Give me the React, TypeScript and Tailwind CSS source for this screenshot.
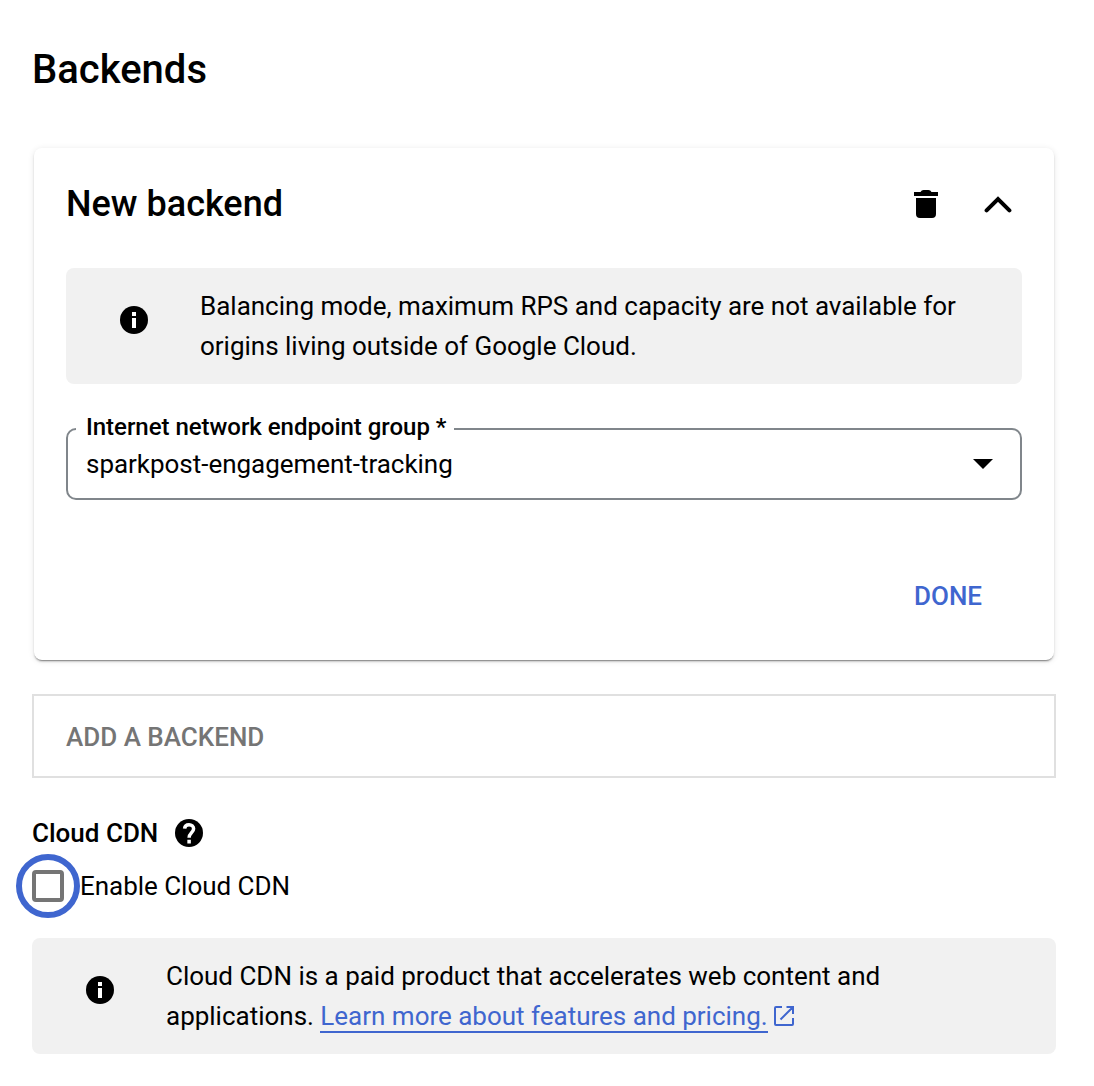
import React from 'react';

function InfoIcon() {
  return (
    <svg className="size-7 shrink-0" viewBox="0 0 28 28">
      <circle cx="14" cy="14" r="14" fill="#000" />
      <path d="M12 6h4v4h-4zM12 12h4v10h-4z" fill="#fff" />
    </svg>
  );
}

export default function App() {
  return (
    <main className="h-[1086px] w-[1094px] overflow-hidden bg-white pl-8 pt-[46px] font-[Roboto,sans-serif] text-[26px] text-black">
      <h1 className="h-[102px] text-[40px] font-medium leading-[48px]">Backends</h1>
      <section className="ml-0.5 h-[512px] w-[1020px] rounded-lg px-8 pt-8 shadow-[0_2px_1px_-1px_rgba(0,0,0,0.32),0_2px_2px_rgba(0,0,0,0.14),0_1px_6px_rgba(0,0,0,0.1)]">
        <header className="flex h-[88px] items-start justify-between">
          <h2 className="text-[36px] font-medium leading-[48px]">New backend</h2>
          <div className="flex gap-[46px] pr-[10px] pt-[10px]">
            <svg className="h-7 w-6" viewBox="0 0 24 28"><path d="M0 2h6.5q1-2 3-2h5q2 0 3 2H24v4H0zM2 8h20v16a4 4 0 0 1-4 4H6a4 4 0 0 1-4-4z" /></svg>
            <svg className="h-7 w-7" viewBox="0 0 28 28"><path d="M2.6 20.4 14 9l11.4 11.4" fill="none" stroke="#000" strokeWidth="4" strokeLinecap="round" /></svg>
          </div>
        </header>
        <div className="flex h-[116px] w-[956px] rounded-lg bg-[#f1f1f1] pl-[54px] pt-[18px] leading-10">
          <div className="w-20 pt-5"><InfoIcon /></div>
          <p className="tracking-[-0.01px]">Balancing mode, maximum RPS and capacity are not available for<br />origins living outside of Google Cloud.</p>
        </div>
        <div className="relative mt-11 flex h-[72px] w-[956px] items-center justify-between rounded-[10px] border-2 border-[#80868b] pl-[18px] pr-[27px]">
          <label className="absolute -top-[19px] left-2 w-[378px] whitespace-nowrap bg-white pl-2.5 text-[24px] font-medium leading-8 tracking-[-0.03px]">Internet network endpoint group *</label>
          <span className="tracking-[-0.03px]">sparkpost-engagement-tracking</span>
          <svg className="h-[10px] w-5" viewBox="0 0 20 10"><path d="M0 0h20L10 10z" /></svg>
        </div>
        <button className="ml-[848px] mt-[76px] text-[26px] font-medium leading-10 text-[#3f66cf]">DONE</button>
      </section>
      <button className="mt-[34px] block h-[84px] w-[1024px] border-2 border-[#e0e0e0] pl-8 pt-0.5 text-left font-medium text-[#757575]">ADD A BACKEND</button>
      <div className="mt-[35px] flex h-10 items-center gap-[17px]">
        <h3 className="font-medium">Cloud CDN</h3>
        <svg className="size-7" viewBox="0 0 28 28"><circle cx="14" cy="14" r="14" /><path d="M9.6 9.6C9.8 7.2 11.6 5.7 14 5.7c2.6 0 4.6 1.6 4.6 4 0 3.8-4.5 4.2-4.5 9.1M14.1 20.8v3.6" fill="none" stroke="#fff" strokeWidth="3.5" /></svg>
      </div>
      <label className="-ml-4 flex h-[66px] items-center">
        <span className="flex size-16 items-center justify-center rounded-full border-[6px] border-[#3f66cf]"><span className="size-8 rounded-[4px] border-4 border-[#757575]" /></span>
        <span className="tracking-[-0.03px]">Enable Cloud CDN</span>
      </label>
      <div className="mt-[19px] flex h-[116px] w-[1024px] rounded-lg bg-[#f1f1f1] pl-[54px] pt-[18px] leading-10">
        <div className="w-20 pt-5"><InfoIcon /></div>
        <p className="tracking-[-0.01px]">Cloud CDN is a paid product that accelerates web content and<br />applications. <a className="border-b-2 border-[#3f66cf] text-[#3f66cf]">Learn more about features and pricing.</a><svg className="relative -top-0.5 ml-1.5 inline size-5" viewBox="0 0 20 20" fill="none" stroke="#3f66cf" strokeWidth="2"><path d="M8 1H2a1 1 0 0 0-1 1v16a1 1 0 0 0 1 1h16a1 1 0 0 0 1-1v-6M12.5 1H19v7M19 1 6.5 13.5" /></svg></p>
      </div>
    </main>
  );
}
